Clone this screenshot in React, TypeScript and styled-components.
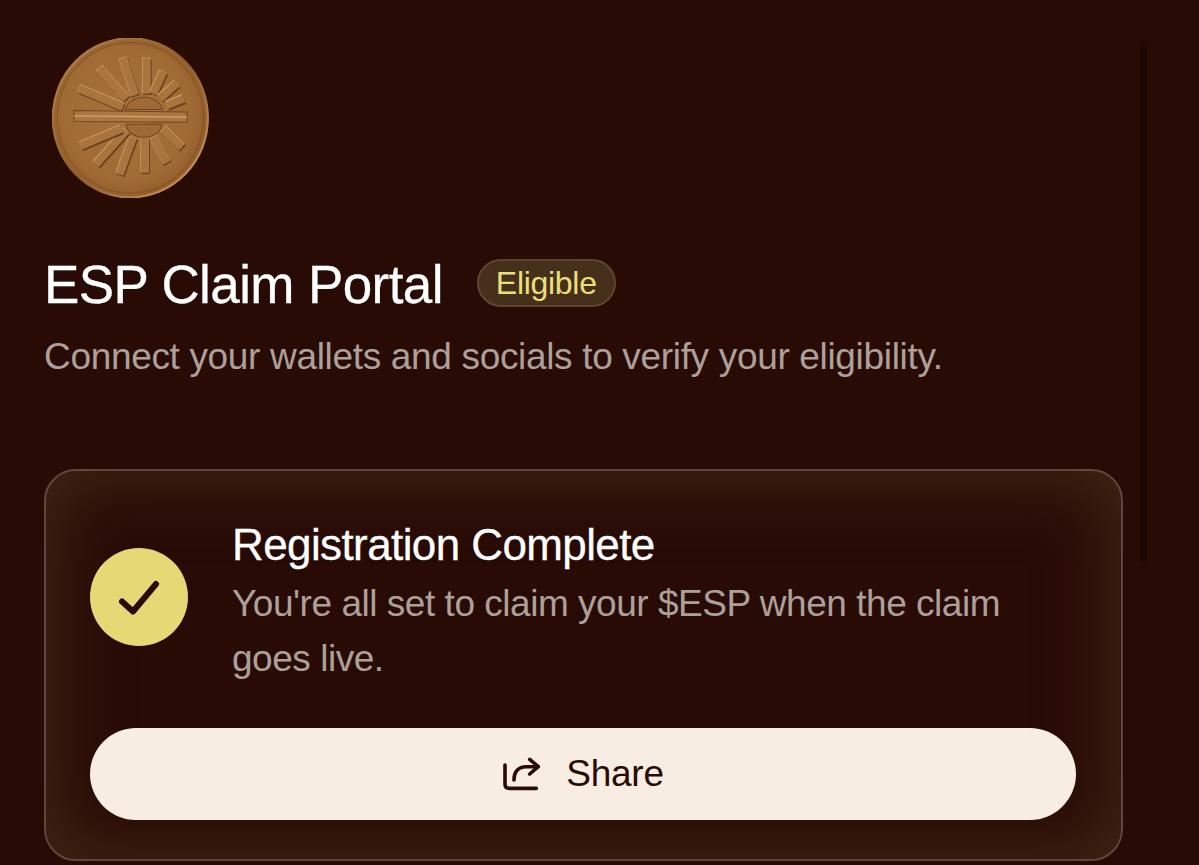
import React from "react"
import styled, {createGlobalStyle} from 'styled-components'

const GlobalStyle = createGlobalStyle`
  html, body {
    margin: 0;
    padding: 0;
    background: #280b05;
  }
  * {
    box-sizing: border-box;
  }
`
const Page = styled.div`
  position: relative;
  width: 1199px;
  height: 865px;
  overflow: hidden;
  padding: 38px 76px 0 44px;
  background: #280b05;
  font-family: "Liberation Sans", Arial, sans-serif;
`
const ScrollThumb = styled.div`
  position: absolute;
  top: 42px;
  left: 1140px;
  width: 7px;
  height: 520px;
  border-radius: 4px;
  background: #1d0703;
`
const Coin = styled.svg`
  display: block;
  width: 157px;
  height: 160px;
  margin-left: 8px;
`
const TitleRow = styled.div`
  display: flex;
  align-items: flex-start;
  gap: 34px;
  margin-top: 57px;
  height: 60px;
`
const Title = styled.h1`
  margin: 0;
  font-size: 53px;
  font-weight: 400;
  line-height: 60px;
  letter-spacing: -0.6px;
  color: #fff;
  -webkit-text-stroke: 0.3px #fff;
`
const Badge = styled.span`
  display: flex;
  align-items: center;
  height: 48px;
  margin-top: 4px;
  padding: 0 17px;
  border: 2px solid #5f452e;
  border-radius: 24px;
  background: #46301c;
  font-size: 32px;
  letter-spacing: -0.3px;
  color: #ebdf7b;
`
const Subtitle = styled.p`
  margin: 19px 0 0 0;
  font-size: 37px;
  line-height: 46px;
  letter-spacing: -0.33px;
  color: #ada09a;
`
const Card = styled.section`
  width: 1079px;
  height: 392px;
  margin-top: 89px;
  padding: 36px 44px 0 44px;
  border: 2px solid #5e483e;
  border-radius: 32px;
  background: #280b05;
  box-shadow: inset 0 0 70px 10px #412616;
`
const Status = styled.div`
  display: flex;
  align-items: center;
  gap: 44px;
`
const CheckCircle = styled.svg`
  flex: none;
  width: 98px;
  height: 98px;
`
const StatusText = styled.div`
  flex: 1;
  padding-top: 10px;
`
const CardTitle = styled.h2`
  margin: 0;
  font-size: 44px;
  font-weight: 400;
  line-height: 56px;
  letter-spacing: -0.6px;
  color: #fff;
  -webkit-text-stroke: 0.3px #fff;
`
const CardText = styled.p`
  margin: 3px 0 0;
  width: 790px;
  font-size: 37px;
  line-height: 55px;
  letter-spacing: -0.47px;
  color: #ada09a;
`
const ShareButton = styled.button`
  display: flex;
  align-items: center;
  justify-content: center;
  gap: 24px;
  width: 986px;
  height: 92px;
  margin-top: 42px;
  border: 0;
  border-radius: 46px;
  background: #f8ede3;
  font-family: inherit;
  font-size: 37px;
  letter-spacing: -0.25px;
  color: #280b05;
`
const ShareIcon = styled.svg`
  width: 40px;
  height: 36px;
`

const rays = [
  [345, 100, 345, 205],
  [275, 100, 310, 210],
  [205, 130, 285, 220],
  [145, 190, 275, 245],
  [395, 140, 365, 205],
  [435, 175, 385, 220],
  [455, 220, 405, 240],
  [340, 335, 340, 440],
  [305, 335, 265, 445],
  [285, 315, 195, 415],
  [270, 310, 150, 360],
  [365, 335, 405, 410],
  [395, 310, 450, 365],
]

const CoinLogo = () => (
  <Coin viewBox="65 40 465 475">
    <defs>
      <radialGradient id="face" cx="48%" cy="48%" r="60%">
        <stop offset="0%" stopColor="#a9723c" />
        <stop offset="70%" stopColor="#a06a35" />
        <stop offset="100%" stopColor="#8a5424" />
      </radialGradient>
      <linearGradient id="rim" x1="0" y1="0" x2="1" y2="1">
        <stop offset="0%" stopColor="#b98850" />
        <stop offset="50%" stopColor="#8f5c2a" />
        <stop offset="100%" stopColor="#d2a26a" />
      </linearGradient>
    </defs>
    <ellipse cx="297" cy="277" rx="230" ry="236" fill="url(#face)" stroke="url(#rim)" strokeWidth="7" />
    <ellipse cx="297" cy="277" rx="217" ry="223" fill="none" stroke="#7d4c1f" strokeWidth="4" opacity="0.55" />
    <g strokeLinecap="butt">
      {rays.map(([x1, y1, x2, y2], i) => (
        <g key={i}>
          <line x1={x1 + 3} y1={y1 + 4} x2={x2 + 3} y2={y2 + 4} stroke="#6f431c" strokeWidth="25" />
          <line x1={x1 - 1} y1={y1 - 2} x2={x2 - 1} y2={y2 - 2} stroke="#c9985f" strokeWidth="25" />
          <line x1={x1} y1={y1} x2={x2} y2={y2} stroke="#a9743d" strokeWidth="22" />
        </g>
      ))}
    </g>
    <path d="M283 252 A55 42 0 0 1 392 252 Z" fill="#a06a35" stroke="#744520" strokeWidth="3" />
    <path d="M285 296 A52 38 0 0 0 390 296 Z" fill="#a06a35" stroke="#744520" strokeWidth="3" />
    <path d="M130 255 L465 260 L465 290 L130 288 Z" fill="#ab763f" stroke="#744520" strokeWidth="3" />
    <path d="M130 271 L465 275" stroke="#d3a470" strokeWidth="4" />
  </Coin>
)

class App extends React.Component {
  render () {
    return <Page>
              <GlobalStyle />
              <ScrollThumb />
              <CoinLogo />
              <TitleRow>
                <Title>ESP Claim Portal</Title>
                <Badge>Eligible</Badge>
              </TitleRow>
              <Subtitle>Connect your wallets and socials to verify your eligibility.</Subtitle>
              <Card>
                <Status>
                  <CheckCircle viewBox="0 0 98 98">
                    <circle cx="49" cy="49" r="49" fill="#e5d875" />
                    <path d="M32 53.5 L43 63.5 L66 36" fill="none" stroke="#280b05" strokeWidth="6" strokeLinecap="round" strokeLinejoin="round" />
                  </CheckCircle>
                  <StatusText>
                    <CardTitle>Registration Complete</CardTitle>
                    <CardText>You're all set to claim your $ESP when the claim goes live.</CardText>
                  </StatusText>
                </Status>
                <ShareButton>
                  <ShareIcon viewBox="0 0 40 36" fill="none" stroke="#280b05" strokeWidth="3.6" strokeLinecap="round" strokeLinejoin="round">
                    <path d="M3 9 V28 Q3 32.4 7.5 32.4 H34.3" />
                    <path d="M12 24 C12 15 17 10.7 24 10.7 H36" />
                    <path d="M27.7 3.3 L36.3 10.7 L27.7 18" />
                  </ShareIcon>
                  Share
                </ShareButton>
              </Card>
            </Page>
  }
}

export default App
